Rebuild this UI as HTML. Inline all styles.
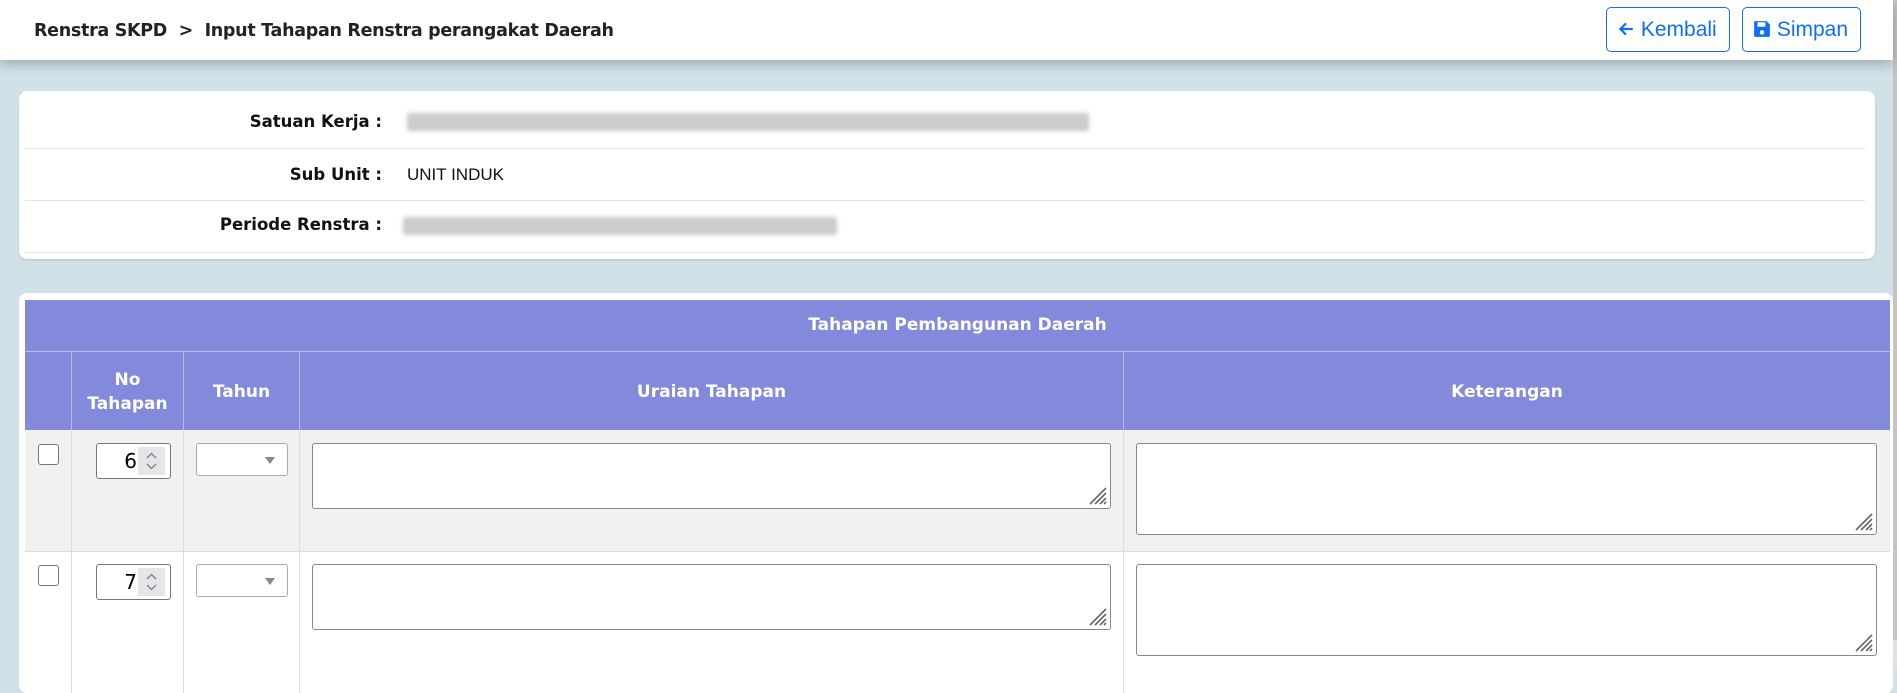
<!DOCTYPE html>
<html><head><meta charset="utf-8"><style>
*{box-sizing:border-box;margin:0;padding:0}
body{width:1897px;height:670px;overflow:hidden;background:#d0e2e8;font-family:"DejaVu Sans","Liberation Sans",sans-serif;position:relative}
.hdr{position:absolute;left:0;top:0;width:1893px;height:60px;background:#fff;box-shadow:0 4px 12px rgba(0,0,0,.25);z-index:2}
.title{position:absolute;left:34px;top:21px;font-size:17.5px;font-weight:bold;color:#222;white-space:nowrap;letter-spacing:-0.3px}
.btn{position:absolute;top:7px;height:45px;border:1px solid #0d6efd;border-radius:5px;color:#0d6efd;font-family:"Liberation Sans",sans-serif;font-size:21px;line-height:43px;padding-left:10px;background:#fff}
.sb{position:absolute;left:1893px;top:0;width:4px;height:670px;background:#e0e0e0}
.sb i{position:absolute;left:0;top:0;width:4px;height:640px;background:#c4c4c4}
.card1{position:absolute;left:19px;top:91px;width:1856px;height:168px;background:#fff;border-radius:8px;box-shadow:0 1px 2px rgba(0,0,0,.15)}
.ln{position:absolute;left:6px;width:1840px;height:1px;background:#dee2e6}
.lab{position:absolute;right:1493px;font-size:16.5px;font-weight:bold;color:#111;white-space:nowrap}
.val{position:absolute;left:388px;font-size:17px;color:#111;font-family:"Liberation Sans",sans-serif}
.blur{position:absolute;height:18px;background:#ccc;filter:blur(2px);border-radius:2px}
.card2{position:absolute;left:19px;top:293px;width:1874px;height:400px;background:#fff;border-radius:8px}
.h1{position:absolute;left:6px;top:7px;width:1865px;height:51px;background:#8389db;color:#fff;font-weight:bold;font-size:17px;text-align:center;line-height:51px}
.h2{position:absolute;left:6px;top:58px;width:1865px;height:79px;background:#8389db;border-top:1px solid #b8bcec}
.h2 div{position:absolute;top:0;height:79px;border-left:1px solid #b8bcec;color:#fff;font-weight:bold;font-size:17px;display:flex;align-items:center;justify-content:center;text-align:center;line-height:24px}
.row{position:absolute;left:6px;width:1865px;border-bottom:1px solid #ddd}
.row .c{position:absolute;top:0;bottom:0;border-left:1px solid #ddd}
.cb{position:absolute;width:21px;height:21px;border:1px solid #777;border-radius:3px;background:#fff}
.num{position:absolute;width:75px;height:36px;border:1px solid #777;border-radius:3px;background:#fff;font-size:20px;font-family:"DejaVu Sans",sans-serif}
.num span{position:absolute;right:33px;top:5px}
.num b{position:absolute;right:5px;top:3px;width:27px;height:28px;background:#e6e6ea}
.sel{position:absolute;width:92px;height:33px;border:1px solid #aaa;border-radius:3px;background:#fff}
.sel:after{content:"";position:absolute;right:12px;top:13px;border-left:5px solid transparent;border-right:5px solid transparent;border-top:7px solid #888}
.ta{position:absolute;border:1px solid #888;border-radius:3px;background:#fff}
.ta svg{position:absolute;right:2px;bottom:2px}
</style></head><body>
<div class="hdr">
<div class="title">Renstra SKPD &nbsp;&gt;&nbsp; Input Tahapan Renstra perangakat Daerah</div>
<div class="btn" style="left:1606px;width:124px">
<svg width="18" height="18" viewBox="0 0 16 16" style="vertical-align:-2px"><path d="M14 8H3M8 3L3 8l5 5" stroke="#0d6efd" stroke-width="2" fill="none"/></svg> Kembali</div>
<div class="btn" style="left:1742px;width:119px">
<svg width="18" height="18" viewBox="0 0 16 16" style="vertical-align:-2px"><path d="M2 1h10l3 3v10a1 1 0 0 1-1 1H2a1 1 0 0 1-1-1V2a1 1 0 0 1 1-1z" fill="#0d6efd"/><rect x="4" y="2" width="7" height="4" fill="#fff"/><circle cx="8" cy="11" r="2" fill="#fff"/></svg> Simpan</div>
</div>
<div class="sb"><i></i></div>
<div class="card1">
<div class="lab" style="top:21px">Satuan Kerja :</div>
<div class="blur" style="left:388px;top:22px;width:682px"></div>
<div class="ln" style="top:57px"></div>
<div class="lab" style="top:74px">Sub Unit :</div>
<div class="val" style="top:74px">UNIT INDUK</div>
<div class="ln" style="top:109px"></div>
<div class="lab" style="top:124px">Periode Renstra :</div>
<div class="blur" style="left:384px;top:126px;width:434px"></div>
<div class="ln" style="top:161px"></div>
</div>
<div class="card2">
<div class="h1">Tahapan Pembangunan Daerah</div>
<div class="h2">
<div style="left:46px;width:112px">No<br>Tahapan</div>
<div style="left:158px;width:116px">Tahun</div>
<div style="left:274px;width:824px">Uraian Tahapan</div>
<div style="left:1098px;width:767px">Keterangan</div>
</div>
<div class="row" style="top:137px;height:122px;background:#f1f1f1">
<div class="c" style="left:46px"></div><div class="c" style="left:158px"></div><div class="c" style="left:274px"></div><div class="c" style="left:1098px"></div>
<div class="cb" style="left:13px;top:14px"></div>
<div class="num" style="left:71px;top:13px"><span>6</span><b><svg width="27" height="28"><path d="M9 11l4.5-4.5L18 11M9 17l4.5 4.5L18 17" stroke="#888" stroke-width="1.5" fill="none"/></svg></b></div>
<div class="sel" style="left:171px;top:13px"></div>
<div class="ta" style="left:287px;top:13px;width:799px;height:66px"><svg width="22" height="22"><path d="M4 20L20 4M9 20L20 9M14 20L20 14M18 20L20 18" stroke="#666" stroke-width="1.6"/></svg></div>
<div class="ta" style="left:1111px;top:13px;width:741px;height:92px"><svg width="22" height="22"><path d="M4 20L20 4M9 20L20 9M14 20L20 14M18 20L20 18" stroke="#666" stroke-width="1.6"/></svg></div>
</div>
<div class="row" style="top:259px;height:141px;background:#fff;border:none">
<div class="c" style="left:46px"></div><div class="c" style="left:158px"></div><div class="c" style="left:274px"></div><div class="c" style="left:1098px"></div>
<div class="cb" style="left:13px;top:13px"></div>
<div class="num" style="left:71px;top:12px"><span>7</span><b><svg width="27" height="28"><path d="M9 11l4.5-4.5L18 11M9 17l4.5 4.5L18 17" stroke="#888" stroke-width="1.5" fill="none"/></svg></b></div>
<div class="sel" style="left:171px;top:12px"></div>
<div class="ta" style="left:287px;top:12px;width:799px;height:66px"><svg width="22" height="22"><path d="M4 20L20 4M9 20L20 9M14 20L20 14M18 20L20 18" stroke="#666" stroke-width="1.6"/></svg></div>
<div class="ta" style="left:1111px;top:12px;width:741px;height:92px"><svg width="22" height="22"><path d="M4 20L20 4M9 20L20 9M14 20L20 14M18 20L20 18" stroke="#666" stroke-width="1.6"/></svg></div>
</div>
</div>
</body></html>
